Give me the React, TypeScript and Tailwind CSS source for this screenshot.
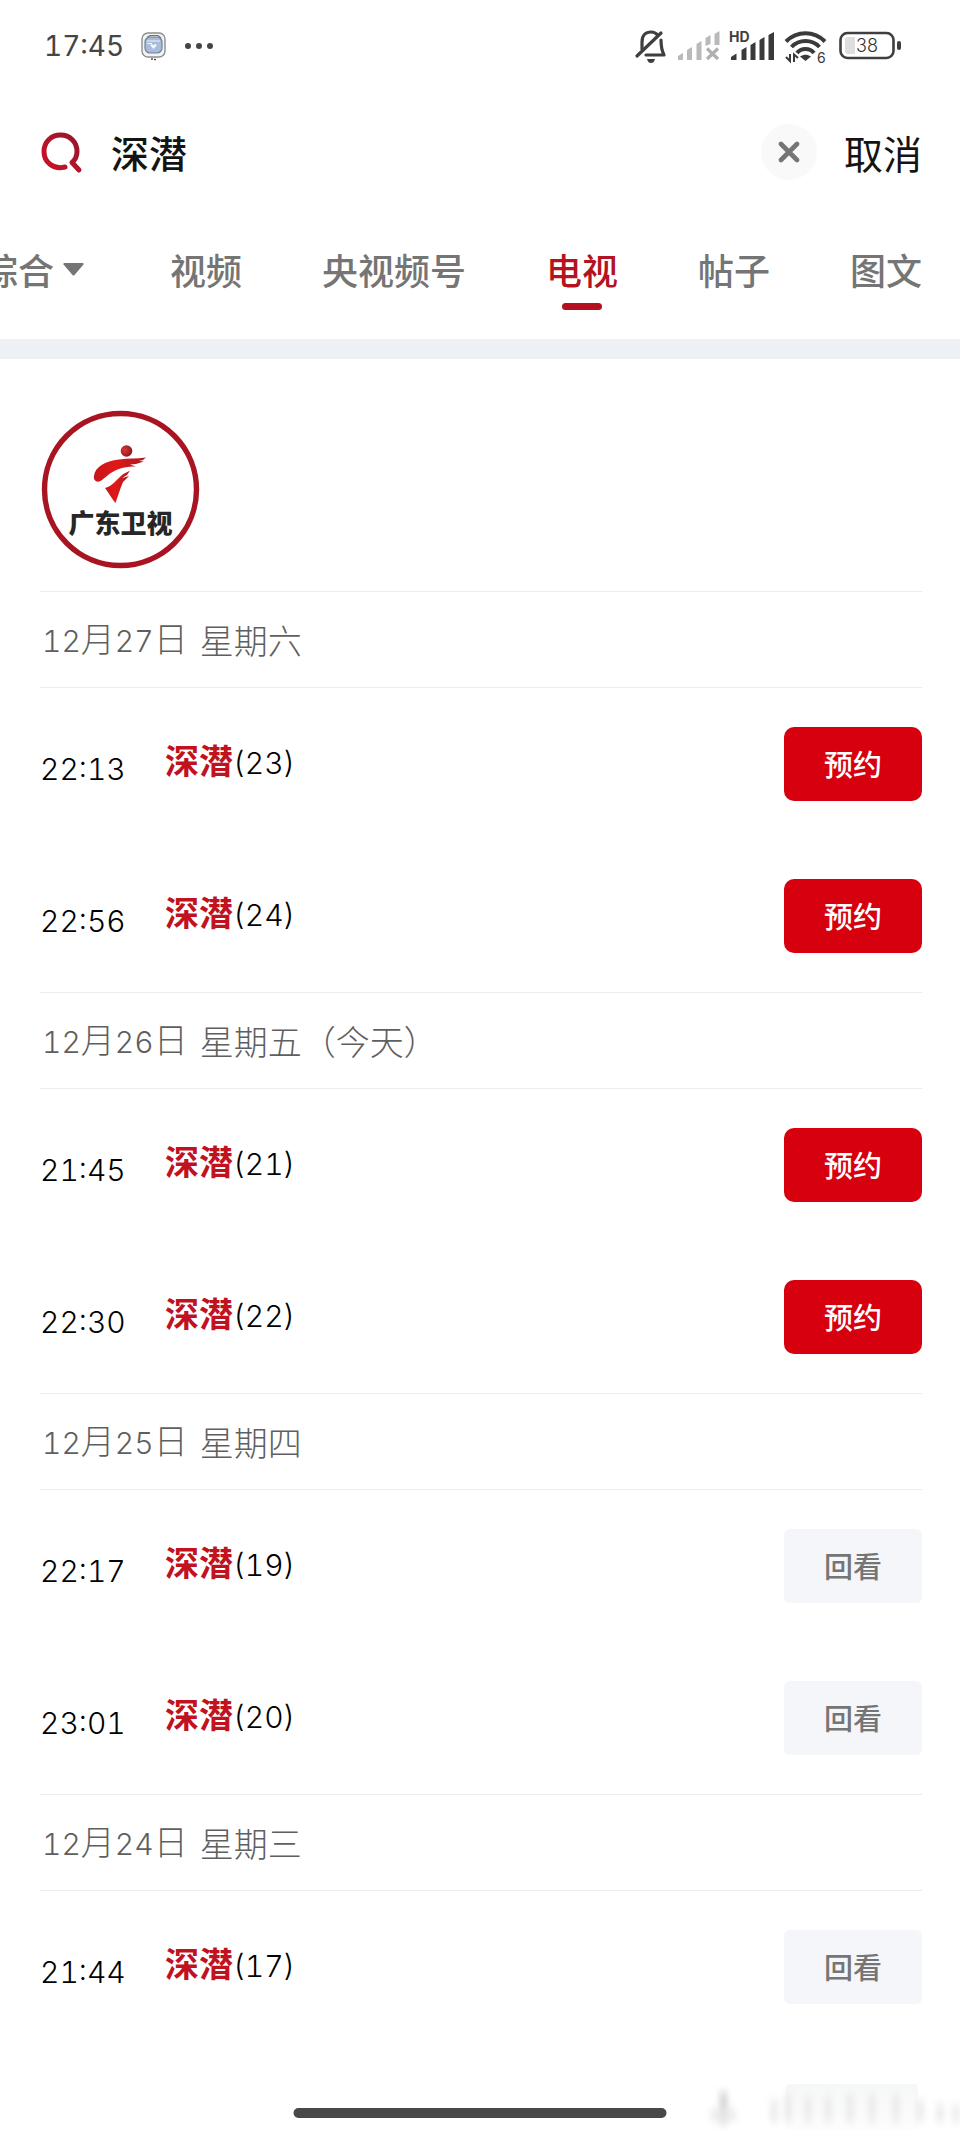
import { useState } from "react";

type Programme = { time: string; episode: number; action: "预约" | "回看" };
type Day = { date: string; weekday: string; programmes: Programme[] };

const days: Day[] = [
  {
    date: "12月27日",
    weekday: "星期六",
    programmes: [
      { time: "22:13", episode: 23, action: "预约" },
      { time: "22:56", episode: 24, action: "预约" },
    ],
  },
  {
    date: "12月26日",
    weekday: "星期五（今天）",
    programmes: [
      { time: "21:45", episode: 21, action: "预约" },
      { time: "22:30", episode: 22, action: "预约" },
    ],
  },
  {
    date: "12月25日",
    weekday: "星期四",
    programmes: [
      { time: "22:17", episode: 19, action: "回看" },
      { time: "23:01", episode: 20, action: "回看" },
    ],
  },
  {
    date: "12月24日",
    weekday: "星期三",
    programmes: [{ time: "21:44", episode: 17, action: "回看" }],
  },
];

const tabs = ["综合", "视频", "央视频号", "电视", "帖子", "图文"];

function StatusBar() {
  return (
    <div className="flex h-[92px] shrink-0 items-center justify-between pl-11 pr-[58px] text-[#454545]">
      <div className="flex items-center">
        <span className="font-['Inter',sans-serif] text-[28px] leading-10 tabular-nums">17:45</span>
        <svg className="ml-4 mr-4" width="28" height="30" viewBox="0 0 28 30" aria-hidden="true">
          <rect x="2" y="2" width="23" height="24" rx="6" fill="#f4f4ee" stroke="#8d8f90" strokeWidth="1.4" />
          <rect x="5" y="6" width="17" height="16" rx="5" fill="#a9bddb" stroke="#6c7f9f" strokeWidth="1.2" />
          <path d="M7 6.5 L10 4.5 H18 L21 7" fill="none" stroke="#6b7280" strokeWidth="1.2" />
          <path d="M7 10 H20 M7 12.500 H12" stroke="#eef3fb" strokeWidth="1.2" />
          <path d="M10 14 L13.500 18 L17 14 L15 13 L13.500 14.500 L12 13 Z" fill="#f6f9ff" />
          <path d="M11 28 h2 M14 28.500 h2" stroke="#555" strokeWidth="1.5" />
        </svg>
        <svg width="30" height="8" viewBox="0 0 30 8" fill="#454545" aria-hidden="true">
          <circle cx="4" cy="4" r="3" />
          <circle cx="15" cy="4" r="3" />
          <circle cx="26" cy="4" r="3" />
        </svg>
      </div>
      <svg width="268" height="48" viewBox="635 22 268 48" aria-hidden="true">
        <g fill="none" stroke="#3f3f3f" strokeWidth="3.200" strokeLinecap="round" strokeLinejoin="round">
          <path d="M643 49 V42 C643 35 647 32 652 32 C655 32 657 33 658.500 35" />
          <path d="M662 40 C662 47 663 51 665 55 H647" />
          <path d="M638 56 L662 33" />
        </g>
        <path d="M648 59 H656 C655 62 654 63 652 63 C650 63 649 62 648 59 Z" fill="#3f3f3f" />
        <g fill="#b9b9b9">
          <path d="M679 56 l5 -3 v7 h-5 z" />
          <path d="M688 50 l5 -3 v13 h-5 z" />
          <path d="M697.500 44 l5 -3 v19 h-5 z" />
          <path d="M706.500 38 l5 -3 v9 l-5 2 z" />
          <path d="M715.500 34 l5 -3 v14 h-5 z" />
          <path d="M708 48.500 L719 59 M719 48.500 L708 59" stroke="#b0b0b0" strokeWidth="3.200" />
        </g>
        <text x="730" y="42" fontSize="14" fontWeight="700" fontFamily="Inter, sans-serif" fill="#3f3f3f">
          HD
        </text>
        <g fill="#3a3a3a">
          <path d="M732 57 l5.500 -3.500 v6.500 h-5.500 z" />
          <path d="M742.500 50 l5 -3 v13 h-5 z" />
          <path d="M751.500 45 l5 -3 v18 h-5 z" />
          <path d="M760.500 40 l5 -3 v23 h-5 z" />
          <path d="M769.500 35 l5.500 -3 v28 h-5.500 z" />
        </g>
        <g fill="none" stroke="#3a3a3a" strokeWidth="4">
          <path d="M787 41.500 C798 30.500 815 30.500 826 41.500" />
          <path d="M792.500 47 C800 39 813 39 820.500 47" />
          <path d="M798 53 C802 47.500 811 47.500 815 53" />
        </g>
        <path d="M801 56.500 C805 54 808 54 812 56.500 L806.500 61 Z" fill="#3a3a3a" />
        <path d="M787 57 L791 61 V54 M795 62 V54.500 L799 58" fill="none" stroke="#3a3a3a" strokeWidth="2" />
        <text x="818" y="63" fontSize="14" fontFamily="Inter, sans-serif" fill="#3a3a3a">
          6
        </text>
        <rect x="841.500" y="33" width="53" height="25" rx="7" fill="#fff" stroke="#3f3f3f" strokeWidth="2.600" />
        <path d="M849 37 h7 v17 h-7 q-3 0 -3 -3 v-11 q0 -3 3 -3 z" fill="#dedede" />
        <rect x="898" y="41" width="4" height="9" rx="2" fill="#3f3f3f" />
        <text x="868" y="52" fontSize="18" fontWeight="300" textAnchor="middle" fontFamily="Inter, sans-serif" fill="#333">
          38
        </text>
      </svg>
    </div>
  );
}

function SearchBar() {
  const [query, setQuery] = useState("深潜");
  return (
    <form className="flex h-[120px] shrink-0 items-center pl-10 pr-[38px]" onSubmit={(e) => e.preventDefault()}>
      <label htmlFor="query" className="shrink-0" aria-label="搜索">
        <svg width="44" height="44" viewBox="0 0 44 44" fill="none" aria-hidden="true">
          <defs>
            <linearGradient id="lens" x1="1" y1="0" x2="0" y2="1">
              <stop offset="0" stopColor="#93152a" />
              <stop offset="1" stopColor="#cf1226" />
            </linearGradient>
          </defs>
          <path
            d="M25 37 C13 40 4 32 4 21.500 C4 12 11 5 20.500 5 C30 5 37 12 37 21.500 C37 26 35.500 29.500 32 32.500 L39 40"
            stroke="url(#lens)"
            strokeWidth="5"
            strokeLinecap="round"
            strokeLinejoin="round"
          />
        </svg>
      </label>
      <input
        id="query"
        type="text"
        value={query}
        onChange={(e) => setQuery(e.target.value)}
        className="ml-[27px] min-w-0 flex-1 bg-transparent text-[38px] font-medium leading-[56px] text-[#141414] outline-none"
      />
      <button
        type="button"
        aria-label="清除"
        onClick={() => setQuery("")}
        className="flex size-14 shrink-0 items-center justify-center rounded-full bg-[#f9f9fa]"
      >
        <svg width="22" height="22" viewBox="0 0 22 22" aria-hidden="true">
          <path d="M3 3 L19 19 M19 3 L3 19" stroke="#757575" strokeWidth="4.600" strokeLinecap="round" />
        </svg>
      </button>
      <button type="button" className="ml-[27px] shrink-0 text-[39px] leading-[56px] text-[#141414]">
        取消
      </button>
    </form>
  );
}

function Tabs() {
  const [active, setActive] = useState("电视");
  return (
    <nav className="-ml-[18px] flex h-[127px] shrink-0 items-start justify-between pr-[38px] pt-[31px]">
      {tabs.map((tab) => (
        <button
          key={tab}
          type="button"
          onClick={() => setActive(tab)}
          className={
            tab === active
              ? "flex flex-col items-center text-[36px] font-medium leading-[52px] text-[#b3141f]"
              : "flex flex-col items-center text-[36px] font-medium leading-[52px] text-[#757575]"
          }
        >
          <span className="flex items-center whitespace-nowrap">
            {tab}
            {tab === "综合" && (
              <svg className="ml-[9px] mr-1.5" width="21" height="13" viewBox="0 0 21 13" aria-hidden="true">
                <path d="M1 0 H20 Q21 0.500 20.500 1.500 L11.500 12 Q10.500 13 9.500 12 L0.500 1.500 Q0 0.500 1 0 Z" fill="#757575" />
              </svg>
            )}
          </span>
          {tab === active && <span className="mt-2 h-[7px] w-10 rounded-full bg-[#b5101f]" />}
        </button>
      ))}
    </nav>
  );
}

function ChannelLogo() {
  return (
    <svg width="159" height="159" viewBox="0 0 159 159" role="img" aria-label="广东卫视">
      <defs>
        <linearGradient id="brush" x1="0" y1="0" x2="1" y2="0">
          <stop offset="0" stopColor="#c4161b" />
          <stop offset="0.4" stopColor="#e01818" />
          <stop offset="1" stopColor="#ac1a1f" />
        </linearGradient>
        <radialGradient id="ball" cx="0.35" cy="0.4" r="0.7">
          <stop offset="0" stopColor="#d93a35" />
          <stop offset="1" stopColor="#8c1217" />
        </radialGradient>
      </defs>
      <circle cx="79.500" cy="79.500" r="76" fill="#fff" stroke="#a81422" strokeWidth="5.400" />
      <circle cx="85.500" cy="41" r="5.800" fill="url(#ball)" />
      <path
        d="M53 66 C54 57 64 51 78 49.500 C87 48 96 49 105 47.500 L102 50 L98 51 L103 51.500 L95 54 L89 54.500 L95 56.500 C83 56.500 76 59 69 63.500 L61 70 C56 74 52 70 53 66 Z"
        fill="url(#brush)"
      />
      <path
        d="M64 78 C72 76 76 69 81 65 C84 62.500 87 62 89 60.500 L86 65 L81 68 L88 66 L82 72 C79 79 77 86 74.500 93 C71 89 68 83 64 78 Z"
        fill="url(#brush)"
      />
      <text
        x="79.500"
        y="123"
        fontSize="26"
        fontWeight="900"
        textAnchor="middle"
        fontFamily="'Noto Sans CJK SC', sans-serif"
        fill="#262626"
      >
        广东卫视
      </text>
    </svg>
  );
}

function DateText({ children }: { children: string }) {
  return (
    <span>
      {children.split(/(\d+)/).map((part, i) =>
        i % 2 === 1 ? (
          <span key={i} className="font-['Inter',sans-serif] text-[30px] tabular-nums">
            {part}
          </span>
        ) : (
          part
        ),
      )}
    </span>
  );
}

function ProgrammeRow({ time, episode, action }: Programme) {
  return (
    <li className="flex h-[152px] items-center">
      <time className="w-[125px] pt-2.5 font-['Inter',sans-serif] text-[30px] font-light leading-[48px] tabular-nums text-black">
        {time}
      </time>
      <p className="flex-1 pb-1.5 text-[34px] leading-[48px]">
        <span className="font-bold text-[#c1121f]">深潜</span>
        <span className="font-['Inter',sans-serif] text-[30px] font-light tabular-nums text-black">({episode})</span>
      </p>
      <button
        type="button"
        className={
          action === "预约"
            ? "h-[74px] w-[138px] rounded-[10px] bg-[#d6000f] pb-0.5 text-[29px] font-medium leading-10 text-white"
            : "h-[74px] w-[138px] rounded-md bg-[#f5f6fa] pb-0.5 text-[29px] font-medium leading-10 text-[#757575]"
        }
      >
        {action}
      </button>
    </li>
  );
}

function HomeIndicator() {
  return (
    <div className="absolute inset-x-0 bottom-0 h-[90px]">
      <svg className="absolute bottom-0 right-0" width="270" height="90" viewBox="0 0 270 90" aria-hidden="true">
        <defs>
          <filter id="haze" x="-20%" y="-20%" width="140%" height="140%">
            <feGaussianBlur stdDeviation="3 5" />
          </filter>
          <linearGradient id="fade" x1="0" y1="0" x2="0" y2="1">
            <stop offset="0" stopColor="#f6f7f8" />
            <stop offset="1" stopColor="#fdfdfd" />
          </linearGradient>
        </defs>
        <rect x="96" y="40" width="132" height="46" rx="4" fill="url(#fade)" />
        <g filter="url(#haze)">
          <rect x="30" y="48" width="7" height="32" fill="#cfcfcf" />
          <rect x="20" y="66" width="26" height="10" fill="#e9e9e9" />
          <path
            d="M84 56 V78 M98 50 V78 M118 52 V78 M138 52 V78 M160 50 V78 M182 50 V78 M206 50 V78 M230 56 V78 M250 60 V78 M266 62 V78"
            stroke="#e9e9e9"
            strokeWidth="7"
          />
        </g>
      </svg>
      <div className="absolute bottom-4 left-1/2 h-[10px] w-[373px] -translate-x-1/2 rounded-full bg-[#484848]" />
    </div>
  );
}

export default function App() {
  return (
    <div className="relative flex h-screen flex-col overflow-hidden bg-white font-['Noto_Sans_CJK_SC',sans-serif]">
      <StatusBar />
      <SearchBar />
      <Tabs />
      <div className="h-5 shrink-0 bg-[#edf0f4]" />
      <main className="min-h-0 flex-1 overflow-hidden pl-10 pr-[38px]">
        <div className="flex h-[232px] items-start pl-px pt-[51px]">
          <ChannelLogo />
        </div>
        {days.map((day) => (
          <section key={day.date} className="border-t border-[#ececec]">
            <h2 className="flex h-24 items-center gap-3 border-b border-[#ececec] pl-0.5 text-[34px] font-light leading-[48px] text-[#5f5f5f]">
              <DateText>{day.date}</DateText>
              <span>{day.weekday}</span>
            </h2>
            <ul>
              {day.programmes.map((p) => (
                <ProgrammeRow key={p.time} {...p} />
              ))}
            </ul>
          </section>
        ))}
      </main>
      <HomeIndicator />
    </div>
  );
}
